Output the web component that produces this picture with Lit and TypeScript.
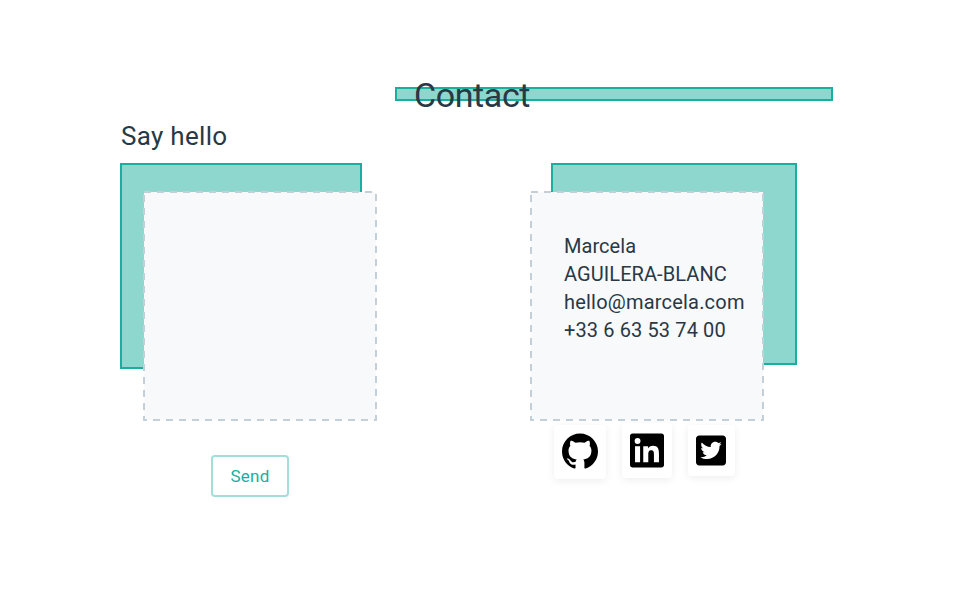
import { LitElement, html, css } from "lit";
import { customElement } from "lit/decorators.js";

@customElement("dashed-panel")
class DashedPanel extends LitElement {
  static styles = css`
    :host { display: block; position: relative; width: 234px; height: 230px; }
    .frame { position: absolute; inset: 0; display: block; }
    .frame rect { fill: #f7f9fb; stroke: #c3cfd9; stroke-width: 2; stroke-dasharray: 7 6; }
    .content { position: relative; padding: 41px 0 0 34px; }
  `;
  render() {
    return html`
      <svg class="frame" width="234" height="230" viewBox="0 0 234 230">
        <rect x="1" y="1" width="232" height="228" />
      </svg>
      <div class="content"><slot></slot></div>
    `;
  }
}

@customElement("app-root")
class AppRoot extends LitElement {
  static styles = css`
    :host {
      display: block; width: 960px; height: 600px; overflow: hidden; background: #fff;
      font-family: Roboto, "Liberation Sans", sans-serif; color: #293845;
    }
    * { box-sizing: border-box; }
    header { padding: 87px 0 0 395px; }
    .bar {
      display: flex; align-items: center; width: 438px; height: 14px; padding-left: 17px;
      background: #8dd7cf; border: 2px solid #1aae9f;
    }
    h1 { margin: 0; font-size: 34px; font-weight: 400; line-height: 40px; letter-spacing: -0.4px; padding-top: 2px; }
    main { display: flex; padding-left: 120px; }
    .left { width: 410px; }
    h2 { margin: 0; height: 62px; padding: 19px 0 0 1px; font-size: 26px; font-weight: 400; line-height: 32px; letter-spacing: 0.3px; }
    .stack { position: relative; height: 258px; padding-top: 28px; }
    .left .stack { padding-left: 23px; }
    .block { position: absolute; top: 0; background: #8dd7cf; border: 2px solid #1aae9f; }
    .block.a { left: 0; width: 242px; height: 206px; }
    .block.b { left: 21px; width: 246px; height: 202px; }
    .right { padding-top: 62px; }
    .line { height: 28px; line-height: 28px; font-size: 20px; white-space: nowrap; }
    .l1 { letter-spacing: 0.05px; }
    .l2 { letter-spacing: 0.08px; }
    .l3 { letter-spacing: 0.2px; }
    .l4 { letter-spacing: 0.12px; }
    button {
      display: block; margin: 34px 0 0 91px; width: 78px; height: 42px; padding: 0;
      background: #fff; border: 2px solid #a3dfd8; border-radius: 4px;
      color: #1aae9f; font: 400 17px/38px Roboto, sans-serif; letter-spacing: 0.25px;
    }
    .social { display: flex; align-items: flex-start; gap: 16px; padding: 2px 0 0 24px; }
    .card {
      display: flex; justify-content: center; background: #fff;
      border-radius: 4px; box-shadow: 0 2px 8px rgba(0, 0, 0, 0.07);
    }
    .card svg { display: block; overflow: visible; }
    .github { width: 52px; height: 54px; margin-top: 2px; padding-top: 8px; }
    .linkedin { width: 50px; height: 55px; padding-top: 10px; }
    .twitter { width: 47px; height: 51px; margin-top: 2px; padding: 10px 1px 0 0; }
  `;
  render() {
    return html`
      <header><div class="bar"><h1>Contact</h1></div></header>
      <main>
        <section class="left">
          <h2>Say hello</h2>
          <div class="stack">
            <div class="block a"></div>
            <dashed-panel></dashed-panel>
          </div>
          <button>Send</button>
        </section>
        <section class="right">
          <div class="stack">
            <div class="block b"></div>
            <dashed-panel>
              <div class="line"><span class="l1">Marcela</span></div>
              <div class="line"><span class="l2">AGUILERA-BLANC</span></div>
              <div class="line"><span class="l3">hello@marcela.com</span></div>
              <div class="line"><span class="l4">+33 6 63 53 74 00</span></div>
            </dashed-panel>
          </div>
          <div class="social">
            <div class="card github">
              <svg width="36" height="36" viewBox="0 0 24 24"><path d="M12 .297c-6.63 0-12 5.373-12 12 0 5.303 3.438 9.8 8.205 11.385.6.113.82-.258.82-.577 0-.285-.01-1.04-.015-2.04-3.338.724-4.042-1.61-4.042-1.61C4.422 18.07 3.633 17.7 3.633 17.7c-1.087-.744.084-.729.084-.729 1.205.084 1.838 1.236 1.838 1.236 1.07 1.835 2.809 1.305 3.495.998.108-.776.417-1.305.76-1.605-2.665-.3-5.466-1.332-5.466-5.93 0-1.31.465-2.38 1.235-3.22-.135-.303-.54-1.523.105-3.176 0 0 1.005-.322 3.3 1.23.96-.267 1.98-.399 3-.405 1.02.006 2.04.138 3 .405 2.28-1.552 3.285-1.23 3.285-1.23.645 1.653.24 2.873.12 3.176.765.84 1.23 1.91 1.23 3.22 0 4.61-2.805 5.625-5.475 5.92.42.36.81 1.096.81 2.22 0 1.606-.015 2.896-.015 3.286 0 .315.21.69.825.57C20.565 22.092 24 17.592 24 12.297c0-6.627-5.373-12-12-12"/></svg>
            </div>
            <div class="card linkedin">
              <svg width="34" height="34" viewBox="0 -0.28 24 24"><path d="M20.447 20.452h-3.554v-5.569c0-1.328-.027-3.037-1.852-3.037-1.853 0-2.136 1.445-2.136 2.939v5.667H9.351V9h3.414v1.561h.046c.477-.9 1.637-1.85 3.37-1.85 3.601 0 4.267 2.37 4.267 5.455v6.286zM5.337 7.433a2.062 2.062 0 0 1-2.063-2.065 2.064 2.064 0 1 1 2.063 2.065zm1.782 13.019H3.555V9h3.564v11.452zM22.225 0H1.771C.792 0 0 .774 0 1.729v20.542C0 23.227.792 24 1.771 24h20.451C23.2 24 24 23.227 24 22.271V1.729C24 .774 23.2 0 22.222 0h.003z"/></svg>
            </div>
            <div class="card twitter">
              <svg width="30" height="30" viewBox="0 26 448 448"><path d="M400 32H48C21.500 32 0 53.500 0 80v352c0 26.500 21.500 48 48 48h352c26.500 0 48-21.500 48-48V80c0-26.500-21.500-48-48-48zm-48.900 158.800c.2 2.800.2 5.700.2 8.500 0 86.700-66 186.600-186.600 186.600-37.200 0-71.700-10.800-100.700-29.400 5.300.6 10.400.8 15.800.8 30.700 0 58.900-10.400 81.400-28-28.800-.6-53-19.500-61.300-45.500 10.100 1.500 19.200 1.500 29.600-1.200-30-6.100-52.500-32.500-52.500-64.400v-.8c8.700 4.900 18.900 7.900 29.600 8.300a65.447 65.447 0 0 1-29.200-54.600c0-12.200 3.200-23.400 8.900-33.100 32.300 39.800 80.800 65.800 135.200 68.600-9.300-44.500 24-80.600 64-80.600 18.900 0 35.900 7.900 47.900 20.700 14.800-2.800 29-8.300 41.600-15.800-4.900 15.200-15.200 28-28.800 36.100 13.200-1.400 26-5.100 37.800-10.200-8.900 13.100-20.100 24.700-32.900 34z"/></svg>
            </div>
          </div>
        </section>
      </main>
    `;
  }
}
